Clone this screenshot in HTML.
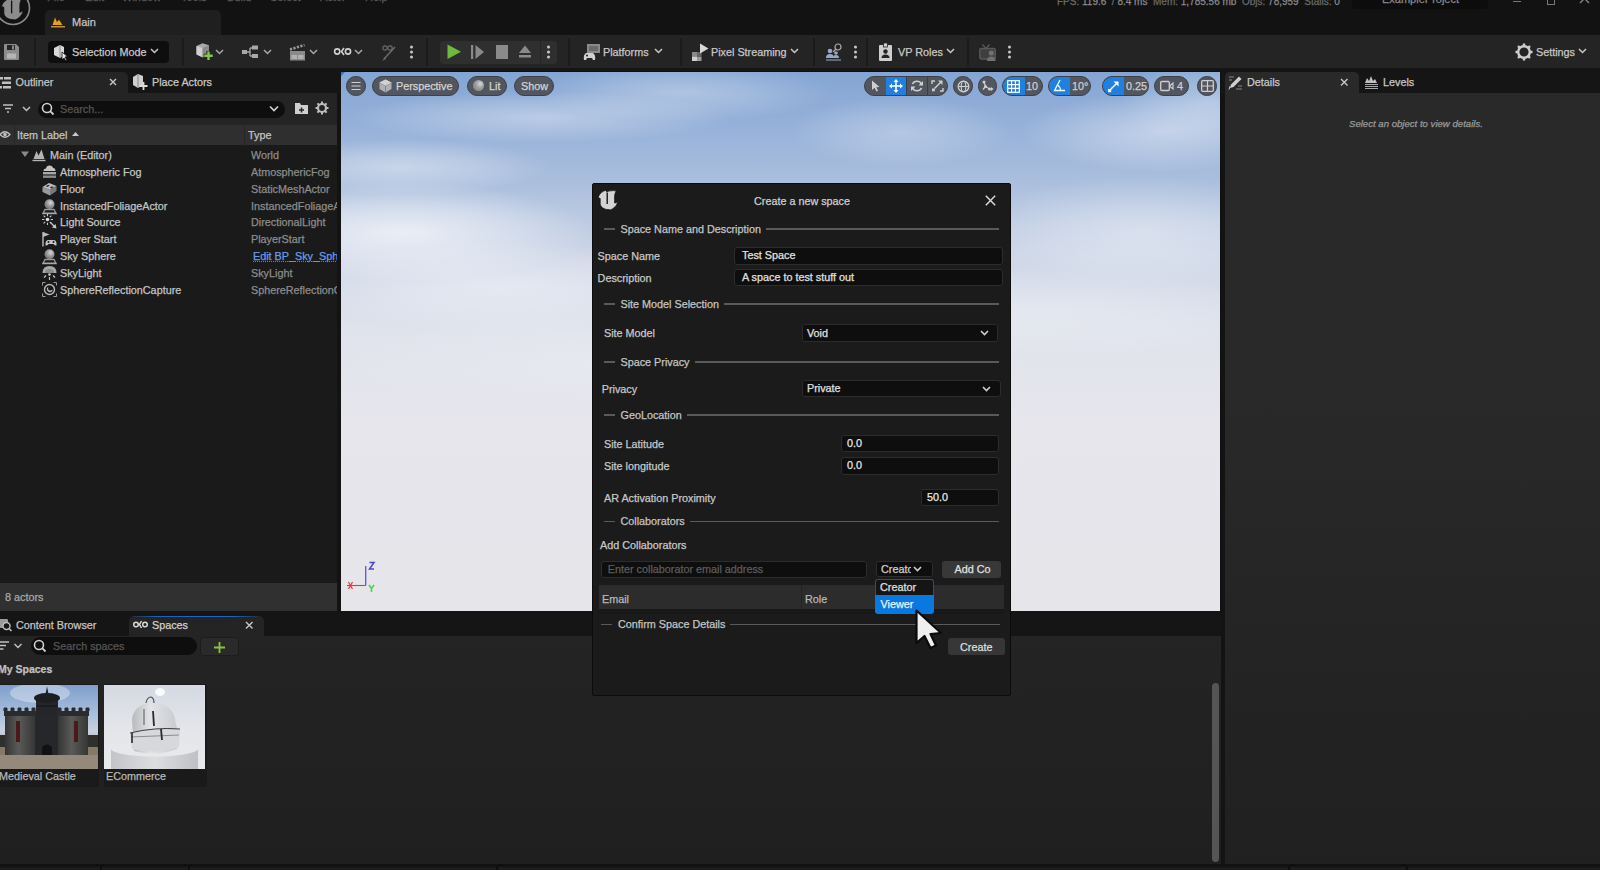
<!DOCTYPE html>
<html><head><meta charset="utf-8">
<style>
*{box-sizing:border-box}
html,body{margin:0;padding:0}
body{width:1600px;height:870px;overflow:hidden;position:relative;background:#131313;font-family:"Liberation Sans",sans-serif;font-size:10.8px;color:#c0c0c0;-webkit-text-stroke:0.25px currentColor}
.a{position:absolute}
.t{position:absolute;white-space:nowrap;line-height:12px}
svg{position:absolute;overflow:visible}
</style></head>
<body>
<!-- TITLE BAR -->
<div class="a" style="left:0;top:0;width:1600px;height:35px;background:#121212"></div>
<div class="a" id="maintab" style="left:45px;top:9.5px;width:176px;height:26px;background:#1f1f1f;border-radius:5px 5px 0 0"></div>
<div class="t" style="left:72px;top:16px;color:#c4c4c4;font-size:11px">Main</div>

<!-- TOOLBAR -->
<div class="a" style="left:0;top:35px;width:1600px;height:33px;background:#242424"></div>


<!-- TITLE CONTENT -->
<svg style="left:0;top:0" width="40" height="35" viewBox="0 0 40 35"><circle cx="13" cy="8" r="16.5" fill="none" stroke="#8a8a8a" stroke-width="1.6"/><g transform="translate(1.5,-2) scale(1.1)"><path d="M0 7.5 C1.5 3.5 4.5 1 8 0.3 L8.6 1.8 C11 0.9 14.5 0.3 18.2 0.8 C17.2 2.8 16.6 4.8 16.6 7 L16.6 13 C17.6 13 18.6 12.4 19.6 11.4 C19.2 15.5 15.8 18.5 12.2 20 C11.5 19.5 11 19.3 10.5 19.6 C6 19.6 2.2 17 2.2 13.5 L2.2 8.5 Z" fill="#8c8c8c" stroke="#111" stroke-width="0.6"/><path d="M9.2 2.5 L9.2 14" stroke="#111" stroke-width="1.2"/></g></svg>
<div class="t" style="left:47px;top:-9px;color:#5a5a5a;font-size:11px;word-spacing:0">File</div>
<div class="t" style="left:85px;top:-9px;color:#5a5a5a;font-size:11px">Edit</div>
<div class="t" style="left:122px;top:-9px;color:#5a5a5a;font-size:11px">Window</div>
<div class="t" style="left:181px;top:-9px;color:#5a5a5a;font-size:11px">Tools</div>
<div class="t" style="left:227px;top:-9px;color:#5a5a5a;font-size:11px">Build</div>
<div class="t" style="left:270px;top:-9px;color:#5a5a5a;font-size:11px">Select</div>
<div class="t" style="left:320px;top:-9px;color:#5a5a5a;font-size:11px">Actor</div>
<div class="t" style="left:365px;top:-9px;color:#5a5a5a;font-size:11px">Help</div>
<div class="t" style="left:1057px;top:-4.5px;color:#6a6a6a;font-size:10px">FPS: <span style="color:#8a8a8a">119.6</span> &nbsp;/ <span style="color:#8a8a8a">8.4 ms</span> &nbsp;Mem: <span style="color:#8a8a8a">1,785.56 mb</span> &nbsp;Objs: <span style="color:#8a8a8a">78,959</span> &nbsp;Stalls: <span style="color:#8a8a8a">0</span></div>
<div class="a" style="left:1352px;top:-4px;width:136px;height:13px;background:#0c0c0c;border-radius:4px"></div>
<div class="t" style="left:1382px;top:-7px;color:#8a8a8a;font-size:11px">ExampleProject</div>
<div class="a" style="left:1513px;top:1px;width:8px;height:1px;background:#777"></div>
<div class="a" style="left:1547px;top:-3px;width:8px;height:8px;border:1px solid #777"></div>
<svg style="left:1579px;top:-2px" width="12" height="8"><path d="M1 -4 L10 5 M10 -4 L1 5" stroke="#888" stroke-width="1.3"/></svg>
<svg style="left:51px;top:16.5px" width="16" height="12"><path d="M1.5 8 L4 0.5 L6 5 L8 2.8 L11.5 8 Z" fill="#e3a11a"/><rect x="0" y="9" width="14" height="1.5" fill="#c0903a"/></svg>

<!-- TOOLBAR CONTENT -->
<svg style="left:4px;top:44px" width="16" height="17"><path d="M0 1 Q0 0 1 0 L12 0 L15 3 L15 15 Q15 16 14 16 L1 16 Q0 16 0 15 Z" fill="#8c8c8c"/><rect x="3" y="1" width="8" height="5" fill="#242424"/><rect x="8" y="1.5" width="2" height="4" fill="#8c8c8c"/><rect x="3" y="9.5" width="9" height="5" fill="#b5b5b5"/></svg>
<div class="a" style="left:34px;top:38px;width:2px;height:28px;background:#1b1b1b"></div>
<div class="a" style="left:48px;top:41px;width:121px;height:22px;background:#0e0e0e;border-radius:4px"></div>
<svg style="left:54px;top:45px" width="14" height="16"><path d="M0 3 L6 0 L10 2 L10 11 L6 13 L0 10 Z" fill="#d8d8d8"/><path d="M6 0 L6 13" stroke="#888" stroke-width="1"/><path d="M8 7 L8 15 L10 13 L12 16 L13 15 L11 12 L13.5 11.5 Z" fill="#e8e8e8" stroke="#0e0e0e" stroke-width="0.8"/></svg>
<div class="t" style="left:72px;top:46px;color:#c8c8c8">Selection Mode</div>
<svg style="left:150px;top:48px" width="10" height="7"><path d="M1 1 L4.5 4.5 L8 1" stroke="#c8c8c8" stroke-width="1.5" fill="none"/></svg>
<div class="a" style="left:182px;top:38px;width:2px;height:28px;background:#1b1b1b"></div>
<svg style="left:196px;top:43px" width="20" height="19"><path d="M0.5 3 L6.5 0.3 L13 2.2 L13 11 L7 14.5 L0.5 11.5 Z" fill="#a8a8a8"/><path d="M0.5 3 L6.5 5 L6.5 14.2 L0.5 11.5 Z" fill="#cfcfcf"/><path d="M6.5 5 L13 2.2 L13 11 L6.5 14.2 Z" fill="#8a8a8a"/><path d="M12.5 8 L12.5 17.5 M7.8 12.8 L17.2 12.8" stroke="#242424" stroke-width="4.2"/><path d="M12.5 8.5 L12.5 17 M8.3 12.8 L16.7 12.8" stroke="#86c846" stroke-width="2.4"/></svg>
<svg style="left:215px;top:49px" width="10" height="7"><path d="M1 1 L4.5 4.5 L8 1" stroke="#a8a8a8" stroke-width="1.5" fill="none"/></svg>
<svg style="left:242px;top:45px" width="20" height="14"><rect x="0" y="5" width="5" height="4" fill="#a8a8a8"/><path d="M5 7 L8 7 M8 3 L8 11 M8 3 L10 3 M8 11 L10 11" stroke="#a8a8a8" stroke-width="1.3" fill="none"/><rect x="10" y="0.5" width="6" height="4" fill="#a8a8a8"/><rect x="10" y="9" width="6" height="4" fill="#a8a8a8"/></svg>
<svg style="left:263px;top:49px" width="10" height="7"><path d="M1 1 L4.5 4.5 L8 1" stroke="#a8a8a8" stroke-width="1.5" fill="none"/></svg>
<svg style="left:289px;top:44px" width="17" height="17"><path d="M1 5.5 L15.5 1" stroke="#9a9a9a" stroke-width="2.6" stroke-dasharray="2.2 1.4"/><rect x="1" y="7" width="15" height="9.5" fill="#8a8a8a"/><rect x="2.5" y="11" width="5.5" height="4" fill="#b0b0b0"/><rect x="9" y="11" width="5.5" height="4" fill="#b0b0b0"/></svg>
<svg style="left:309px;top:49px" width="10" height="7"><path d="M1 1 L4.5 4.5 L8 1" stroke="#a8a8a8" stroke-width="1.5" fill="none"/></svg>
<svg style="left:334px;top:47px" width="18" height="9"><circle cx="3.2" cy="4.5" r="2.6" fill="none" stroke="#d0d0d0" stroke-width="1.6"/><circle cx="14" cy="4.5" r="2.6" fill="none" stroke="#d0d0d0" stroke-width="1.6"/><path d="M10 1 L7.5 4.5 L10 8" stroke="#d0d0d0" stroke-width="1.6" fill="none"/></svg>
<svg style="left:354px;top:49px" width="10" height="7"><path d="M1 1 L4.5 4.5 L8 1" stroke="#a8a8a8" stroke-width="1.5" fill="none"/></svg>
<svg style="left:381px;top:44px" width="18" height="18"><path d="M3 15 L14 3" stroke="#6a6a6a" stroke-width="1.5"/><path d="M1 17 L4 13 L5 15 Z" fill="#6a6a6a"/><circle cx="4" cy="4" r="2.2" fill="none" stroke="#6a6a6a" stroke-width="1.2"/><circle cx="9" cy="4" r="2.2" fill="none" stroke="#6a6a6a" stroke-width="1.2"/></svg>
<svg style="left:409px;top:45px" width="6" height="15"><circle cx="2.5" cy="2" r="1.5" fill="#c8c8c8"/><circle cx="2.5" cy="7" r="1.5" fill="#c8c8c8"/><circle cx="2.5" cy="12" r="1.5" fill="#c8c8c8"/></svg>
<div class="a" style="left:426px;top:38px;width:2px;height:28px;background:#1b1b1b"></div>
<div class="a" style="left:440px;top:40.5px;width:117px;height:23.5px;background:#2f2f2f;border-radius:4px"></div>
<div class="a" style="left:539.5px;top:40.5px;width:1.5px;height:23.5px;background:#262626"></div>
<svg style="left:447px;top:44px" width="15" height="16"><path d="M0.5 0.5 L14 7.8 L0.5 15 Z" fill="#6dbb3c"/></svg>
<svg style="left:471px;top:45px" width="15" height="14"><rect x="0" y="0" width="2.2" height="14" fill="#8a8a8a"/><path d="M4.5 0 L13 7 L4.5 14 Z" fill="#8a8a8a"/></svg>
<div class="a" style="left:496px;top:45px;width:12px;height:14px;background:#8a8a8a"></div>
<svg style="left:518px;top:44px" width="15" height="15"><path d="M1 9 L7 1.5 L13 9 Z" fill="#8a8a8a"/><rect x="1" y="11" width="12" height="2.5" fill="#8a8a8a"/></svg>
<svg style="left:546px;top:45px" width="6" height="15"><circle cx="2.5" cy="2" r="1.5" fill="#c8c8c8"/><circle cx="2.5" cy="7" r="1.5" fill="#c8c8c8"/><circle cx="2.5" cy="12" r="1.5" fill="#c8c8c8"/></svg>
<div class="a" style="left:568px;top:38px;width:2px;height:28px;background:#1b1b1b"></div>
<svg style="left:583px;top:44px" width="19" height="17"><rect x="4" y="0" width="13" height="9" fill="#8a8a8a"/><rect x="6" y="2" width="9" height="5" fill="#6a6a6a"/><path d="M1 16 Q0 11 3 9 L10 9 Q13 11 12 16 L10 16 L9 14 L4 14 L3 16 Z" fill="#d0d0d0"/><circle cx="4" cy="11.5" r="1" fill="#242424"/></svg>
<div class="t" style="left:603px;top:46px;color:#c8c8c8">Platforms</div>
<svg style="left:654px;top:48px" width="10" height="7"><path d="M1 1 L4.5 4.5 L8 1" stroke="#c8c8c8" stroke-width="1.5" fill="none"/></svg>
<div class="a" style="left:680px;top:38px;width:2px;height:28px;background:#1b1b1b"></div>
<svg style="left:692px;top:43px" width="18" height="18"><rect x="0" y="9" width="5" height="4.5" fill="#8a8a8a"/><rect x="0" y="13.5" width="5" height="4.5" fill="#d0d0d0"/><rect x="5" y="13.5" width="4.5" height="4.5" fill="#9a9a9a"/><rect x="5" y="9" width="4.5" height="4.5" fill="#666"/><path d="M8 0.5 L16.5 5.5 L8 10.5 Z" fill="#d8d8d8"/></svg>
<div class="t" style="left:711px;top:46px;color:#c8c8c8">Pixel Streaming</div>
<svg style="left:790px;top:48px" width="10" height="7"><path d="M1 1 L4.5 4.5 L8 1" stroke="#c8c8c8" stroke-width="1.5" fill="none"/></svg>
<div class="a" style="left:813px;top:38px;width:2px;height:28px;background:#1b1b1b"></div>
<svg style="left:826px;top:43px" width="17" height="19"><circle cx="4" cy="8" r="2.3" fill="#9aa8c8"/><path d="M0 15 Q0 11 4 11 Q8 11 8 15 Z" fill="#9aa8c8"/><circle cx="10" cy="10" r="1.8" fill="#9aa8c8"/><path d="M7 15 Q7 12 10 12 Q13 12 13 15 Z" fill="#9aa8c8"/><path d="M0 17 L15 17" stroke="#8090b0" stroke-width="1.3"/><circle cx="12" cy="4" r="3" fill="none" stroke="#aaa" stroke-width="1.2"/><path d="M10 6 L7 9" stroke="#aaa" stroke-width="1.2"/></svg>
<svg style="left:853px;top:45px" width="6" height="15"><circle cx="2.5" cy="2" r="1.5" fill="#c8c8c8"/><circle cx="2.5" cy="7" r="1.5" fill="#c8c8c8"/><circle cx="2.5" cy="12" r="1.5" fill="#c8c8c8"/></svg>
<div class="a" style="left:866px;top:38px;width:2px;height:28px;background:#1b1b1b"></div>
<svg style="left:879px;top:43px" width="14" height="18"><rect x="0" y="2" width="13" height="16" rx="1" fill="#cfcfcf"/><rect x="4.5" y="0" width="4" height="4" fill="#cfcfcf" stroke="#242424" stroke-width="0.8"/><circle cx="6.5" cy="8.5" r="2.2" fill="#242424"/><path d="M2.5 15 Q2.5 11.5 6.5 11.5 Q10.5 11.5 10.5 15 Z" fill="#242424"/></svg>
<div class="t" style="left:898px;top:46px;color:#c8c8c8">VP Roles</div>
<svg style="left:945.5px;top:48px" width="10" height="7"><path d="M1 1 L4.5 4.5 L8 1" stroke="#c8c8c8" stroke-width="1.5" fill="none"/></svg>
<div class="a" style="left:967px;top:38px;width:2px;height:28px;background:#1b1b1b"></div>
<svg style="left:979px;top:43.5px" width="18" height="18"><path d="M3.5 0.5 L7 4.5 L10.5 0.5" stroke="#585858" stroke-width="1.2" fill="none"/><rect x="0.8" y="4.5" width="15.5" height="10.5" rx="1.5" fill="#3e3e3e" stroke="#585858" stroke-width="1.4"/><circle cx="12.3" cy="9" r="2.6" fill="#707070"/><path d="M8 17 Q8 12.5 12.3 12.5 Q16.6 12.5 16.6 17 Z" fill="#707070"/></svg>
<svg style="left:1007px;top:45px" width="6" height="15"><circle cx="2.5" cy="2" r="1.5" fill="#c8c8c8"/><circle cx="2.5" cy="7" r="1.5" fill="#c8c8c8"/><circle cx="2.5" cy="12" r="1.5" fill="#c8c8c8"/></svg>
<svg style="left:1515px;top:43px" width="18" height="18"><g transform="translate(9,9)"><circle r="5.8" fill="none" stroke="#cfcfcf" stroke-width="2.4"/><g stroke="#cfcfcf" stroke-width="2.4"><path d="M0 -8.5 L0 -5.5 M0 5.5 L0 8.5 M-8.5 0 L-5.5 0 M5.5 0 L8.5 0 M-6 -6 L-4 -4 M4 4 L6 6 M-6 6 L-4 4 M4 -4 L6 -6"/></g></g></svg>
<div class="t" style="left:1536px;top:46px;color:#c8c8c8">Settings</div>
<svg style="left:1578px;top:48px" width="10" height="7"><path d="M1 1 L4.5 4.5 L8 1" stroke="#c8c8c8" stroke-width="1.5" fill="none"/></svg>

<!-- TAB WELL -->
<div class="a" style="left:0;top:68px;width:1600px;height:25px;background:#151515"></div>

<!-- OUTLINER -->
<div class="a" style="left:0;top:72px;width:128px;height:21px;background:#242424;border-radius:0 5px 0 0"></div>
<div class="a" style="left:0;top:93px;width:337px;height:32px;background:#242424"></div>
<div class="a" style="left:0;top:125px;width:337px;height:20px;background:#2f2f2f"></div>
<div class="a" style="left:0;top:145px;width:337px;height:438px;background:#1a1a1a"></div>
<div class="a" style="left:0;top:583px;width:337px;height:28px;background:#303030"></div>


<!-- OUTLINER CONTENT -->
<svg style="left:0;top:76px" width="12" height="14"><rect x="0" y="1" width="3" height="2.5" fill="#c0c0c0"/><rect x="4" y="1" width="7" height="2.5" fill="#c0c0c0"/><rect x="2" y="5.5" width="9" height="2.5" fill="#c0c0c0"/><rect x="0" y="10" width="2" height="2.5" fill="#c0c0c0"/><rect x="3" y="10" width="8" height="2.5" fill="#c0c0c0"/></svg>
<div class="t" style="left:15.5px;top:76px;color:#c4c4c4">Outliner</div>
<svg style="left:109px;top:78px" width="9" height="9"><path d="M1 1 L7 7 M7 1 L1 7" stroke="#c8c8c8" stroke-width="1.4"/></svg>
<svg style="left:133px;top:74px" width="16" height="17"><path d="M0 3 L5 0 L10 2 L10 11 L5 14 L0 11 Z" fill="#cfcfcf"/><path d="M5 0 L5 14" stroke="#888" stroke-width="1"/><path d="M10.5 8 L10.5 16 M6.5 12 L14.5 12" stroke="#dcdcdc" stroke-width="1.8"/></svg>
<div class="t" style="left:152px;top:76px;color:#c8c8c8">Place Actors</div>

<svg style="left:3px;top:104px" width="26" height="10"><path d="M0 1 L10 1 M2 4.5 L8 4.5 M4 8 L6 8" stroke="#c0c0c0" stroke-width="1.7"/><path d="M20 3 L23.5 6.5 L27 3" stroke="#c0c0c0" stroke-width="1.5" fill="none"/></svg>
<div class="a" style="left:38px;top:100.5px;width:247px;height:17.5px;background:#0e0e0e;border-radius:9px"></div>
<svg style="left:41px;top:102px" width="14" height="14"><circle cx="6" cy="6" r="4.5" fill="none" stroke="#d0d0d0" stroke-width="1.6"/><path d="M9.2 9.2 L12.5 12.5" stroke="#d0d0d0" stroke-width="1.8"/></svg>
<div class="t" style="left:60px;top:103px;color:#555">Search...</div>
<svg style="left:269px;top:105px" width="11" height="8"><path d="M1 1.5 L5 5.5 L9 1.5" stroke="#d0d0d0" stroke-width="1.7" fill="none"/></svg>
<svg style="left:295px;top:102px" width="14" height="13"><path d="M0 2 L0 12 L13 12 L13 3 L6 3 L5 1 L0 1 Z" fill="#cfcfcf"/><path d="M6.5 5.5 L6.5 10.5 M4 8 L9 8" stroke="#242424" stroke-width="1.5"/></svg>
<svg style="left:315px;top:101px" width="14" height="14"><g transform="translate(7,7)"><circle r="4" fill="none" stroke="#bdbdbd" stroke-width="2.2"/><g stroke="#bdbdbd" stroke-width="2"><path d="M0 -6.5 L0 -4 M0 4 L0 6.5 M-6.5 0 L-4 0 M4 0 L6.5 0 M-4.6 -4.6 L-3 -3 M3 3 L4.6 4.6 M-4.6 4.6 L-3 3 M3 -3 L4.6 -4.6"/></g></g></svg>

<svg style="left:0;top:130px" width="11" height="9"><path d="M0 4.5 Q5 -1 10 4.5 Q5 10 0 4.5 Z" fill="none" stroke="#c0c0c0" stroke-width="1.3"/><circle cx="5" cy="4.5" r="1.8" fill="#c0c0c0"/></svg>
<div class="a" style="left:14px;top:125px;width:1px;height:20px;background:#262626"></div>
<div class="t" style="left:17px;top:129px;color:#c4c4c4">Item Label</div>
<svg style="left:72px;top:131px" width="8" height="6"><path d="M0 5 L3.5 1 L7 5 Z" fill="#c8c8c8"/></svg>
<div class="a" style="left:243.5px;top:125px;width:1.5px;height:20px;background:#262626"></div>
<div class="t" style="left:248px;top:129px;color:#c4c4c4">Type</div>
<svg style="left:21px;top:151px" width="9" height="7"><path d="M0 0.5 L8 0.5 L4 6 Z" fill="#8a8a8a"/></svg>

<svg style="left:32px;top:147.0px" width="16" height="16"><path d="M0.5 13.5 L13.5 13.5" stroke="#b4b4b4" stroke-width="1.4"/><path d="M1.5 12 L4.5 4 L6.5 8.5 L9.5 2.5 L12.5 12 Z" fill="#b4b4b4"/></svg>
<div class="t" style="left:50px;top:149.0px;color:#c4c4c4">Main (Editor)</div>
<div class="a" style="left:251px;top:149.0px;width:86px;height:14px;overflow:hidden"><div class="t" style="left:0;top:0;color:#8c8c8c">World</div></div>
<svg style="left:42px;top:163.8px" width="16" height="16"><path d="M1.5 7 Q1.5 4.5 4 4.5 Q4.5 1.5 7.5 1.5 Q10.5 1.5 11 4 Q13.5 4 13.5 7 Z" fill="#c4c4c4"/><rect x="1" y="8" width="13" height="2.4" fill="#a8a8a8"/><rect x="1" y="11.5" width="13" height="2.4" fill="#8c8c8c"/></svg>
<div class="t" style="left:60px;top:165.8px;color:#c4c4c4">Atmospheric Fog</div>
<div class="a" style="left:251px;top:165.8px;width:86px;height:14px;overflow:hidden"><div class="t" style="left:0;top:0;color:#8c8c8c">AtmosphericFog</div></div>
<svg style="left:42px;top:180.7px" width="16" height="16"><path d="M0.5 6 L7 2 L14.5 5 L8 9 Z" fill="#c0c0c0"/><path d="M0.5 6 L8 9 L8 14.5 L0.5 11 Z" fill="#9a9a9a"/><path d="M8 9 L14.5 5 L14.5 10 L8 14.5 Z" fill="#7a7a7a"/><path d="M3.5 5.2 L6 3.8 L8 4.6 L5.5 6 Z M7.5 6.8 L10 5.3 L12 6.1 L9.5 7.6 Z" fill="#3a3a3a"/></svg>
<div class="t" style="left:60px;top:182.7px;color:#c4c4c4">Floor</div>
<div class="a" style="left:251px;top:182.7px;width:86px;height:14px;overflow:hidden"><div class="t" style="left:0;top:0;color:#8c8c8c">StaticMeshActor</div></div>
<svg style="left:42px;top:197.6px" width="16" height="16"><defs><radialGradient id="sph" cx="0.6" cy="0.35" r="0.7"><stop offset="0" stop-color="#d8d8d8"/><stop offset="0.5" stop-color="#9a9a9a"/><stop offset="1" stop-color="#6a6a6a"/></radialGradient></defs><circle cx="7.5" cy="6.2" r="5" fill="url(#sph)"/><path d="M1 15.5 L3 11.5 L12 11.5 L14 15.5 Z" fill="none" stroke="#9a9a9a" stroke-width="1.3"/><path d="M0.5 15.3 L14.5 15.3" stroke="#aaa" stroke-width="1.3"/></svg>
<div class="t" style="left:60px;top:199.6px;color:#c4c4c4">InstancedFoliageActor</div>
<div class="a" style="left:251px;top:199.6px;width:86px;height:14px;overflow:hidden"><div class="t" style="left:0;top:0;color:#8c8c8c">InstancedFoliageActor</div></div>
<svg style="left:42px;top:214.4px" width="16" height="16"><circle cx="5.5" cy="5.5" r="1.8" fill="#e0e0e0"/><g stroke="#c8c8c8" stroke-width="1.1"><path d="M5.5 0 L5.5 2.3 M5.5 8.7 L5.5 11 M0 5.5 L2.3 5.5 M8.7 5.5 L11 5.5 M1.6 1.6 L3.2 3.2 M7.8 7.8 L9.4 9.4 M1.6 9.4 L3.2 7.8 M7.8 3.2 L9.4 1.6"/><path d="M8.5 8.5 L13 13" stroke-width="1.3"/></g><path d="M14.5 14.5 L10 13.5 L13.5 10 Z" fill="#c8c8c8"/></svg>
<div class="t" style="left:60px;top:216.4px;color:#c4c4c4">Light Source</div>
<div class="a" style="left:251px;top:216.4px;width:86px;height:14px;overflow:hidden"><div class="t" style="left:0;top:0;color:#8c8c8c">DirectionalLight</div></div>
<svg style="left:42px;top:231.2px" width="16" height="16"><path d="M1 1 L1 15.5" stroke="#bbb" stroke-width="1.4"/><path d="M1 1 L7.5 3.5 L1 6 Z" fill="#bbb"/><path d="M3.5 14.5 Q3 9 6.5 9 L11.5 9 Q15 9 14.5 14.5 Q13 15 11.5 13 L6.5 13 Q5 15 3.5 14.5 Z" fill="#c4c4c4"/><circle cx="6.5" cy="11" r="1" fill="#1a1a1a"/><circle cx="11.5" cy="11" r="1" fill="#1a1a1a"/></svg>
<div class="t" style="left:60px;top:233.2px;color:#c4c4c4">Player Start</div>
<div class="a" style="left:251px;top:233.2px;width:86px;height:14px;overflow:hidden"><div class="t" style="left:0;top:0;color:#8c8c8c">PlayerStart</div></div>
<svg style="left:42px;top:248.1px" width="16" height="16"><defs><radialGradient id="sph2" cx="0.6" cy="0.35" r="0.7"><stop offset="0" stop-color="#d8d8d8"/><stop offset="0.5" stop-color="#9a9a9a"/><stop offset="1" stop-color="#6a6a6a"/></radialGradient></defs><circle cx="7.5" cy="6.2" r="5" fill="url(#sph2)"/><path d="M1 15.5 L3 11.5 L12 11.5 L14 15.5 Z" fill="none" stroke="#9a9a9a" stroke-width="1.3"/><path d="M0.5 15.3 L14.5 15.3" stroke="#aaa" stroke-width="1.3"/></svg>
<div class="t" style="left:60px;top:250.1px;color:#c4c4c4">Sky Sphere</div>
<div class="a" style="left:251px;top:250.1px;width:86px;height:14px;overflow:hidden"><div class="t" style="left:2px;top:0;color:#6a9ae8;text-decoration:underline dotted #5a86d0">Edit BP_Sky_Sphere</div></div>
<svg style="left:42px;top:265.0px" width="16" height="16"><path d="M0.5 8 Q0.5 1 7.5 1 Q14.5 1 14.5 8 Z" fill="#a8a8a8"/><path d="M3 8 Q3 4 7.5 4 Q12 4 12 8 Z" fill="#8a8a8a"/><circle cx="7.5" cy="9.5" r="1.3" fill="#d0d0d0"/><g stroke="#c0c0c0" stroke-width="1.2"><path d="M7.5 12 L7.5 15 M4 10.5 L2 12.5 M11 10.5 L13 12.5"/></g></svg>
<div class="t" style="left:60px;top:267.0px;color:#c4c4c4">SkyLight</div>
<div class="a" style="left:251px;top:267.0px;width:86px;height:14px;overflow:hidden"><div class="t" style="left:0;top:0;color:#8c8c8c">SkyLight</div></div>
<svg style="left:42px;top:281.8px" width="16" height="16"><circle cx="7.5" cy="7.5" r="5" fill="none" stroke="#b8b8b8" stroke-width="1.4"/><path d="M4.8 6.5 Q5 10.5 8.5 10.3 Q10.5 10 10.8 7.5 Q9 9.2 7 8.3 Q5.5 7.5 6.2 5 Q5 5.5 4.8 6.5 Z" fill="#b8b8b8"/><path d="M0.5 3.5 L0.5 0.5 L3.5 0.5 M11.5 0.5 L14.5 0.5 L14.5 3.5 M0.5 11.5 L0.5 14.5 L3.5 14.5 M11.5 14.5 L14.5 14.5 L14.5 11.5" stroke="#999" stroke-width="1" fill="none"/></svg>
<div class="t" style="left:60px;top:283.8px;color:#c4c4c4">SphereReflectionCapture</div>
<div class="a" style="left:251px;top:283.8px;width:86px;height:14px;overflow:hidden"><div class="t" style="left:0;top:0;color:#8c8c8c">SphereReflectionCapture</div></div>
<div class="t" style="left:5px;top:591px;color:#a8a8a8">8 actors</div>
<!-- VIEWPORT -->
<div class="a" id="vp" style="left:341px;top:72px;width:880px;height:539px;overflow:hidden;background:linear-gradient(180deg,#84a5d3 0%,#96b1d9 10%,#aec1de 22%,#cdd6e7 34%,#e0e3ec 48%,#e6e6ec 65%,#e5e5ea 100%)">
  <div class="a" style="left:-130px;top:110px;width:380px;height:100px;background:radial-gradient(closest-side,rgba(244,246,250,0.8) 0%,rgba(244,246,250,0.44) 50%,rgba(244,246,250,0) 100%)"></div>
  <div class="a" style="left:-40px;top:170px;width:400px;height:90px;background:radial-gradient(closest-side,rgba(244,246,250,0.5) 0%,rgba(244,246,250,0.28) 50%,rgba(244,246,250,0) 100%)"></div>
  <div class="a" style="left:-90px;top:67px;width:300px;height:56px;background:radial-gradient(closest-side,rgba(244,246,250,0.45) 0%,rgba(244,246,250,0.25) 50%,rgba(244,246,250,0) 100%)"></div>
  <div class="a" style="left:10px;top:19px;width:380px;height:52px;background:radial-gradient(closest-side,rgba(244,246,250,0.4) 0%,rgba(244,246,250,0.22) 50%,rgba(244,246,250,0) 100%)"></div>
  <div class="a" style="left:190px;top:-10px;width:300px;height:60px;background:radial-gradient(closest-side,rgba(244,246,250,0.35) 0%,rgba(244,246,250,0.19) 50%,rgba(244,246,250,0) 100%)"></div>
  <div class="a" style="left:450px;top:25px;width:220px;height:70px;background:radial-gradient(closest-side,rgba(244,246,250,0.3) 0%,rgba(244,246,250,0.17) 50%,rgba(244,246,250,0) 100%)"></div>
  <div class="a" style="left:680px;top:20px;width:280px;height:80px;background:radial-gradient(closest-side,rgba(244,246,250,0.45) 0%,rgba(244,246,250,0.25) 50%,rgba(244,246,250,0) 100%)"></div>
  <div class="a" style="left:630px;top:105px;width:340px;height:110px;background:radial-gradient(closest-side,rgba(244,246,250,0.45) 0%,rgba(244,246,250,0.25) 50%,rgba(244,246,250,0) 100%)"></div>
  <div class="a" style="left:460px;top:195px;width:480px;height:90px;background:radial-gradient(closest-side,rgba(244,246,250,0.35) 0%,rgba(244,246,250,0.19) 50%,rgba(244,246,250,0) 100%)"></div>
  <div class="a" style="left:0px;top:240px;width:600px;height:100px;background:radial-gradient(closest-side,rgba(244,246,250,0.3) 0%,rgba(244,246,250,0.17) 50%,rgba(244,246,250,0) 100%)"></div>
  <div class="a" style="left:780px;top:-15px;width:180px;height:90px;background:radial-gradient(closest-side,rgba(244,246,250,0.35) 0%,rgba(244,246,250,0.19) 50%,rgba(244,246,250,0) 100%)"></div>
<div class="a" style="left:0;top:0;width:0;height:0;border-top:4px solid #1f78e0;border-right:4px solid transparent"></div>
</div>
<div class="a" style="left:341px;top:70.5px;width:880px;height:1.5px;background:#0e1014"></div>
<div class="a" style="left:341px;top:611px;width:880px;height:1.5px;background:#0e0e0e"></div>
<div class="a" style="left:1219.5px;top:72px;width:1.5px;height:539px;background:#101010"></div>
<!-- VIEWPORT TOOLBAR -->
<div class="a" style="left:346px;top:76px;width:19.5px;height:19.5px;border-radius:50%;background:#52565e;border:1px solid #3c4047"></div>
<svg style="left:351px;top:81px" width="10" height="10"><path d="M0.5 1.5 L9.5 1.5 M0.5 5 L9.5 5 M0.5 8.5 L9.5 8.5" stroke="#d0d0d0" stroke-width="1.2"/></svg>
<div class="a" style="left:372px;top:76px;width:87px;height:19.5px;border-radius:10px;background:#52565e;border:1px solid #3c4047"></div>
<svg style="left:379px;top:79px" width="14" height="14"><path d="M6.5 0.5 L12.5 3.5 L12.5 10 L6.5 13.5 L0.5 10 L0.5 3.5 Z" fill="#aeb0b4"/><path d="M0.5 3.5 L6.5 6.8 L12.5 3.5 M6.5 6.8 L6.5 13.5" stroke="#80838a" stroke-width="1" fill="none"/><path d="M0.5 3.5 L6.5 0.5 L12.5 3.5 L6.5 6.8 Z" fill="#d0d2d5"/></svg>
<div class="t" style="left:396px;top:79.5px;color:#d4d4d4">Perspective</div>
<div class="a" style="left:466.5px;top:76px;width:40.5px;height:19.5px;border-radius:10px;background:#52565e;border:1px solid #3c4047"></div>
<div class="a" style="left:473px;top:80px;width:11px;height:11px;border-radius:50%;background:radial-gradient(circle at 65% 35%,#d8d8d8 0%,#a0a0a0 40%,#7a7a7a 100%)"></div>
<div class="t" style="left:489px;top:79.5px;color:#d4d4d4">Lit</div>
<div class="a" style="left:514px;top:76px;width:40px;height:19.5px;border-radius:10px;background:#52565e;border:1px solid #3c4047"></div>
<div class="t" style="left:521px;top:79.5px;color:#d4d4d4">Show</div>

<div class="a" style="left:864px;top:76px;width:83.5px;height:19.5px;border-radius:10px;background:#52565e;border:1px solid #3c4047;overflow:hidden">
  <div class="a" style="left:20.5px;top:-1px;width:20.5px;height:21px;background:#1f80e0"></div>
  <div class="a" style="left:41px;top:0;width:1px;height:19px;background:#3a3e46"></div>
  <div class="a" style="left:62px;top:0;width:1px;height:19px;background:#3a3e46"></div>
</div>
<svg style="left:871px;top:80px" width="10" height="12"><path d="M1 0.5 L1 10 L3.5 7.8 L5.5 11.5 L7 10.8 L5.2 7.2 L8.5 7 Z" fill="#d0d0d0"/></svg>
<svg style="left:889px;top:79px" width="14" height="14"><path d="M7 1 L7 13 M1 7 L13 7" stroke="#fff" stroke-width="1.5"/><path d="M7 0 L9.5 3 L4.5 3 Z M7 14 L9.5 11 L4.5 11 Z M0 7 L3 4.5 L3 9.5 Z M14 7 L11 4.5 L11 9.5 Z" fill="#fff"/></svg>
<svg style="left:910px;top:79px" width="14" height="14"><path d="M11.5 5 A5 5 0 0 0 2.5 5" stroke="#cfcfcf" stroke-width="1.6" fill="none"/><path d="M2.5 9 A5 5 0 0 0 11.5 9" stroke="#cfcfcf" stroke-width="1.6" fill="none"/><path d="M13 2 L13 6.5 L8.5 6.5 Z M1 12 L1 7.5 L5.5 7.5 Z" fill="#cfcfcf"/></svg>
<svg style="left:931px;top:80px" width="13" height="12"><path d="M1 4 L1 1 L4 1 M9 11 L12 11 L12 8" stroke="#cfcfcf" stroke-width="1.4" fill="none"/><path d="M3.5 8.5 L10 2" stroke="#cfcfcf" stroke-width="1.5"/><path d="M11.5 0.5 L11.5 5 L7 0.5 Z" fill="#cfcfcf"/><rect x="1" y="8.5" width="2.8" height="2.8" fill="#cfcfcf"/></svg>

<div class="a" style="left:953px;top:76px;width:19.5px;height:19.5px;border-radius:50%;background:#52565e;border:1px solid #3c4047"></div>
<svg style="left:956.5px;top:79.5px" width="13" height="13"><circle cx="6.5" cy="6.5" r="5.3" fill="none" stroke="#cfcfcf" stroke-width="1.3"/><ellipse cx="6.5" cy="6.5" rx="2.3" ry="5.3" fill="none" stroke="#cfcfcf" stroke-width="1.1"/><path d="M1.2 6.5 L11.8 6.5" stroke="#cfcfcf" stroke-width="1.1"/></svg>
<div class="a" style="left:977.5px;top:76px;width:19.5px;height:19.5px;border-radius:50%;background:#52565e;border:1px solid #3c4047"></div>
<svg style="left:981px;top:79.5px" width="13" height="13"><path d="M3 2 L4.5 6.5 L2 9.5 M4.5 6.5 L8.5 9 L11.5 9" stroke="#cfcfcf" stroke-width="1.2" fill="none"/><circle cx="3" cy="2" r="1.5" fill="#cfcfcf"/><circle cx="4.5" cy="6.5" r="1.5" fill="#cfcfcf"/><circle cx="8.5" cy="9" r="1.5" fill="#cfcfcf"/><path d="M12.5 9 L10 7 L10 11 Z" fill="#cfcfcf"/></svg>

<div class="a" style="left:1002px;top:76px;width:41px;height:19.5px;border-radius:10px;background:#52565e;border:1px solid #3c4047;overflow:hidden">
  <div class="a" style="left:-1px;top:-1px;width:22.5px;height:21px;background:#1f80e0"></div>
</div>
<svg style="left:1006.5px;top:79.5px" width="13" height="13"><rect x="0.7" y="0.7" width="11.6" height="11.6" fill="none" stroke="#fff" stroke-width="1.2"/><path d="M4.6 0.7 L4.6 12.3 M8.4 0.7 L8.4 12.3 M0.7 4.6 L12.3 4.6 M0.7 8.4 L12.3 8.4" stroke="#fff" stroke-width="1.1"/></svg>
<div class="t" style="left:1026px;top:80px;color:#d0d0d0">10</div>

<div class="a" style="left:1048px;top:76px;width:43px;height:19.5px;border-radius:10px;background:#52565e;border:1px solid #3c4047;overflow:hidden">
  <div class="a" style="left:-1px;top:-1px;width:22px;height:21px;background:#1f80e0"></div>
</div>
<svg style="left:1053px;top:79px" width="13" height="13"><path d="M7 1 L1.5 11.5 L12 11.5" stroke="#fff" stroke-width="1.3" fill="none"/><path d="M4.5 6 Q7.5 8 7.5 11.5" stroke="#fff" stroke-width="1.1" fill="none"/></svg>
<div class="t" style="left:1072px;top:80px;color:#d0d0d0">10°</div>

<div class="a" style="left:1102px;top:76px;width:47px;height:19.5px;border-radius:10px;background:#52565e;border:1px solid #3c4047;overflow:hidden">
  <div class="a" style="left:-1px;top:-1px;width:22px;height:21px;background:#1f80e0"></div>
</div>
<svg style="left:1107px;top:79.5px" width="13" height="13"><path d="M3 10 L10.5 2.5" stroke="#fff" stroke-width="1.5"/><path d="M11.5 1.5 L11.5 6.5 L6.5 1.5 Z" fill="#fff"/><rect x="1" y="9" width="3.2" height="3.2" fill="#fff"/></svg>
<div class="t" style="left:1126px;top:80px;color:#d0d0d0">0.25</div>

<div class="a" style="left:1154px;top:76px;width:35px;height:19.5px;border-radius:10px;background:#52565e;border:1px solid #3c4047"></div>
<svg style="left:1160px;top:80px" width="14" height="12"><rect x="0.7" y="1.5" width="8.6" height="9" rx="1" fill="none" stroke="#cfcfcf" stroke-width="1.3"/><path d="M9.5 6 L13 3 L13 9 Z" fill="none" stroke="#cfcfcf" stroke-width="1.2"/></svg>
<div class="t" style="left:1177px;top:80px;color:#d0d0d0">4</div>
<div class="a" style="left:1197px;top:76px;width:19.5px;height:19.5px;border-radius:50%;background:#52565e;border:1px solid #3c4047"></div>
<svg style="left:1200.5px;top:80px" width="13" height="12"><rect x="0.7" y="0.7" width="11.6" height="10.6" rx="1" fill="none" stroke="#cfcfcf" stroke-width="1.3"/><path d="M6.5 0.7 L6.5 11.3 M0.7 6 L12.3 6" stroke="#cfcfcf" stroke-width="1.2"/></svg>

<svg style="left:340px;top:556px" width="40" height="40"><path d="M25.7 10 L25.7 29.5" stroke="#5a5ad0" stroke-width="1.3"/><path d="M7 29.5 L25.7 29.5" stroke="#e03a3a" stroke-width="1.1"/><path d="M8.5 26 L12.5 33 M12.5 26 L8.5 33 M7 29.5 L14 29.5" stroke="#e03a3a" stroke-width="1.2"/><path d="M29.5 6.5 L34 6.5 L29.5 13 L34 13" stroke="#4848d8" stroke-width="1.5" fill="none"/><path d="M29 29 L31.5 32.5 L34 29 M31.5 32.5 L31.5 36" stroke="#50d050" stroke-width="1.6" fill="none"/></svg>


<!-- DETAILS -->
<div class="a" style="left:1225px;top:72px;width:134px;height:21px;background:#292929;border-radius:5px 5px 0 0"></div>
<div class="a" style="left:1225px;top:93px;width:375px;height:771px;background:linear-gradient(180deg,#292929 0%,#282828 45%,#202020 100%)"></div>

<!-- BOTTOM PANEL -->
<div class="a" style="left:0;top:611px;width:1221px;height:25px;background:#151515"></div>
<div class="a" style="left:129px;top:616px;width:135px;height:20px;background:#242424;border-radius:5px 5px 0 0"></div>
<div class="a" style="left:0;top:636px;width:1221px;height:228px;background:linear-gradient(180deg,#242424,#1f1f1f)"></div>


<!-- DETAILS CONTENT -->
<svg style="left:1228px;top:75px" width="15" height="15"><path d="M2 13 L3 9.5 L11 1.5 L13.5 4 L5.5 12 Z" fill="#d0d0d0"/><path d="M1 14.5 L2.2 11" stroke="#d0d0d0" stroke-width="1"/><path d="M1 2 L6 2 M1 5 L4 5 M8 14 L14 14 M10 11 L14 11" stroke="#888" stroke-width="1"/></svg>
<div class="t" style="left:1247px;top:76px;color:#c8c8c8">Details</div>
<svg style="left:1339.5px;top:78px" width="9" height="9"><path d="M1 1 L7.5 7.5 M7.5 1 L1 7.5" stroke="#c8c8c8" stroke-width="1.4"/></svg>
<svg style="left:1364px;top:75px" width="15" height="15"><path d="M1 8 L3 3 L5 6 L7 1 L9 6 L11 4 L13 8 Z" fill="#c0c0c0"/><path d="M1 9.5 L14 9.5 M1 11.5 L14 11.5 M1 13.5 L14 13.5" stroke="#a8a8a8" stroke-width="1.2"/></svg>
<div class="t" style="left:1383px;top:76px;color:#c8c8c8">Levels</div>
<div class="t" style="left:1349px;top:117.5px;color:#9a9a9a;font-style:italic;font-size:9.6px">Select an object to view details.</div>

<!-- BOTTOM CONTENT -->
<svg style="left:-3px;top:617px" width="16" height="15"><rect x="0" y="2" width="11" height="9" rx="1" fill="#9a9a9a"/><circle cx="9.5" cy="9" r="3.5" fill="#151515" stroke="#c0c0c0" stroke-width="1.4"/><path d="M12 11.5 L14.5 14" stroke="#c0c0c0" stroke-width="1.6"/></svg>
<div class="t" style="left:16px;top:619px;color:#c4c4c4">Content Browser</div>
<div class="a" style="left:133px;top:615.5px;width:125px;height:1.5px;background:linear-gradient(90deg,rgba(30,100,190,0.2),#1e64be 20%,#1e64be 80%,rgba(30,100,190,0.2))"></div>
<svg style="left:133px;top:620px" width="15" height="9"><circle cx="3" cy="4.5" r="2.3" fill="none" stroke="#d8d8d8" stroke-width="1.5"/><circle cx="12" cy="4.5" r="2.3" fill="none" stroke="#d8d8d8" stroke-width="1.5"/><path d="M8.5 1 L6.5 4.5 L8.5 8" stroke="#d8d8d8" stroke-width="1.5" fill="none"/></svg>
<div class="t" style="left:152px;top:619px;color:#d0d0d0">Spaces</div>
<svg style="left:244.5px;top:621px" width="9" height="9"><path d="M1 1 L7.5 7.5 M7.5 1 L1 7.5" stroke="#c8c8c8" stroke-width="1.4"/></svg>

<svg style="left:0px;top:641px" width="24" height="10"><path d="M-2 1 L9 1 M-1 4.5 L6 4.5 M0 8 L3.5 8" stroke="#c0c0c0" stroke-width="1.7"/><path d="M14.5 3 L18 6.5 L21.5 3" stroke="#c0c0c0" stroke-width="1.5" fill="none"/></svg>
<div class="a" style="left:30.5px;top:636.5px;width:166px;height:18.5px;background:#0e0e0e;border-radius:9px"></div>
<svg style="left:33px;top:638.5px" width="14" height="14"><circle cx="6" cy="6" r="4.5" fill="none" stroke="#d0d0d0" stroke-width="1.6"/><path d="M9.2 9.2 L12.5 12.5" stroke="#d0d0d0" stroke-width="1.8"/></svg>
<div class="t" style="left:53px;top:639.5px;color:#555">Search spaces</div>
<div class="a" style="left:200px;top:637px;width:39px;height:18.5px;background:#2a2a2a;border:1px solid #1c1c1c;border-radius:3px"></div>
<svg style="left:212.5px;top:640.5px" width="13" height="13"><path d="M6.5 1 L6.5 12 M1 6.5 L12 6.5" stroke="#8cc43e" stroke-width="1.8"/></svg>
<div class="t" style="left:-2px;top:663px;color:#c0c0c0;font-weight:bold;font-size:10.5px">My Spaces</div>

<div class="a" style="left:0;top:684px;width:98.5px;height:103px;background:#1a1a1a;border-radius:2px"></div>
<div class="a" style="left:0;top:685px;width:98px;height:84px;overflow:hidden;background:linear-gradient(180deg,#7f9fcb 0%,#a9bfdc 35%,#c9d2de 55%,#c0c4c8 62%)">
  <svg style="left:0;top:0" width="98" height="84" viewBox="0 0 98 84">
    <defs>
      <linearGradient id="tw" x1="0" x2="1"><stop offset="0" stop-color="#343434"/><stop offset="0.45" stop-color="#5a5a58"/><stop offset="1" stop-color="#363636"/></linearGradient>
    </defs>
    <ellipse cx="40" cy="8" rx="30" ry="10" fill="rgba(255,255,255,0.35)"/>
    <rect x="0" y="50" width="98" height="14" fill="#2e302c"/>
    <rect x="0" y="62" width="98" height="22" fill="#867a66"/>
    <rect x="0" y="70" width="98" height="14" fill="#94897a"/>
    <rect x="33" y="28" width="28" height="42" fill="#26272a"/>
    <rect x="36" y="13" width="22" height="18" fill="#242629"/>
    <ellipse cx="47" cy="13" rx="13" ry="5" fill="#1c1e22"/>
    <rect x="37" y="20" width="20" height="2" fill="#1a1c1f"/>
    <path d="M45.5 9 L47 1.5 L48.5 9 Z" fill="#1c1e22"/>
    <rect x="5" y="30" width="30" height="40" fill="url(#tw)"/>
    <rect x="58" y="30" width="30" height="40" fill="url(#tw)"/>
    <path d="M4 26 L36 26 L36 31 L4 31 Z" fill="#2a2b2e"/>
    <path d="M57 26 L89 26 L89 31 L57 31 Z" fill="#2a2b2e"/>
    <path d="M4 26 L4 23 L7 23 L7 26 M11 26 L11 23 L14 23 L14 26 M18 26 L18 23 L21 23 L21 26 M25 26 L25 23 L28 23 L28 26 M32 26 L32 23 L35 23 L35 26" fill="#2a2b2e" stroke="#2a2b2e" stroke-width="1"/>
    <path d="M58 26 L58 23 L61 23 L61 26 M65 26 L65 23 L68 23 L68 26 M72 26 L72 23 L75 23 L75 26 M79 26 L79 23 L82 23 L82 26 M86 26 L86 23 L89 23 L89 26" fill="#2a2b2e" stroke="#2a2b2e" stroke-width="1"/>
    <rect x="16" y="36" width="4" height="21" fill="#4a1a1a"/>
    <rect x="74" y="36" width="4" height="21" fill="#4a1a1a"/>
    <path d="M42 70 L42 62 Q47 57 52 62 L52 70 Z" fill="#121212"/>
  </svg>
</div>
<div class="t" style="left:-1px;top:770px;color:#b8b8b8">Medieval Castle</div>

<div class="a" style="left:103.5px;top:684px;width:103px;height:103px;background:#1a1a1a;border-radius:2px"></div>
<div class="a" style="left:104px;top:685px;width:101px;height:84px;overflow:hidden;background:linear-gradient(180deg,#d4d9e2 0%,#e4e6ea 55%,#e8e9eb 100%)">
  <svg style="left:0;top:0" width="101" height="84" viewBox="0 0 101 84">
    <defs>
      <linearGradient id="ped" x1="0" x2="1"><stop offset="0" stop-color="#c2c4c8"/><stop offset="0.5" stop-color="#dcdee0"/><stop offset="1" stop-color="#bec0c4"/></linearGradient>
      <linearGradient id="bpg" x1="0" x2="1"><stop offset="0" stop-color="#b8babe"/><stop offset="0.4" stop-color="#e2e4e8"/><stop offset="1" stop-color="#c8cacf"/></linearGradient>
    </defs>
    <path d="M7 64 L7 84 L94 84 L94 64 Z" fill="url(#ped)"/>
    <ellipse cx="50.5" cy="64" rx="43.5" ry="7.5" fill="#e6e8ea"/>
    <path d="M30 66 L28 34 Q30 20 46 18 Q64 17 70 30 L74 48 L73 64 Q52 72 30 66 Z" fill="url(#bpg)"/>
    <path d="M26 48 Q50 42 76 44 L75 62 Q52 70 28 64 Z" fill="#d6d8dc"/>
    <path d="M26 48 Q50 42 76 44" stroke="#3a3a3a" stroke-width="1" fill="none"/>
    <path d="M27 52 L75 50" stroke="#6a6a6a" stroke-width="0.7"/>
    <path d="M49 26 L50 41" stroke="#2a2a2a" stroke-width="1.8"/>
    <path d="M57 44 L58 55" stroke="#2a2a2a" stroke-width="1.8"/>
    <path d="M40 24 L40 40" stroke="#3a3a3a" stroke-width="0.8"/>
    <path d="M28 48 L28 58" stroke="#2a2a2a" stroke-width="1.6"/>
    <path d="M42 18 Q43 12 47 12 Q50 13 50 18" stroke="#555" stroke-width="1.2" fill="none"/>
    <ellipse cx="56" cy="7" rx="5" ry="4" fill="rgba(255,255,255,0.85)"/>
  </svg>
</div>
<div class="t" style="left:106px;top:770px;color:#b8b8b8">ECommerce</div>

<div class="a" style="left:1211.5px;top:683px;width:7px;height:179px;background:#555;border-radius:4px"></div>
<div class="a" style="left:0;top:864px;width:1600px;height:6px;background:#111"></div>
<div class="a" style="left:0;top:866.5px;width:1600px;height:3.5px;background:#1c1c1c"></div>
<div class="a" style="left:100px;top:866px;width:1.5px;height:4px;background:#0e0e0e"></div>
<div class="a" style="left:188px;top:866px;width:1.5px;height:4px;background:#0e0e0e"></div>
<div class="a" style="left:496px;top:866px;width:1.5px;height:4px;background:#0e0e0e"></div>
<div class="a" style="left:1406px;top:866px;width:1.5px;height:4px;background:#0e0e0e"></div>
<div class="a" style="left:1288px;top:866px;width:1.5px;height:4px;background:#0e0e0e"></div>

<!-- DIALOG -->
<div class="a" id="dlg" style="left:591.5px;top:183px;width:419px;height:513px;background:#1b1b1b;border:1.5px solid #0b0b0b;border-radius:2px"></div>
<svg style="left:598px;top:190px" width="20" height="20" viewBox="0 0 20 20"><path d="M0 7.5 C1.5 3.5 4.5 1 8 0.3 L8.6 1.8 C11 0.9 14.5 0.3 18.2 0.8 C17.2 2.8 16.6 4.8 16.6 7 L16.6 13 C17.6 13 18.6 12.4 19.6 11.4 C19.2 15.5 15.8 18.5 12.2 20 C11.5 19.5 11 19.3 10.5 19.6 C6 19.6 2.2 17 2.2 13.5 L2.2 8.5 Z" fill="#d4d4d4" stroke="#0a0a0a" stroke-width="0.7"/><path d="M9.2 2.5 L9.2 14" stroke="#0a0a0a" stroke-width="1.3"/></svg>
<div class="t" style="left:754px;top:194.5px;color:#cfcfcf">Create a new space</div>
<svg style="left:984.5px;top:195px" width="11" height="11"><path d="M0.8 0.8 L10.2 10.2 M10.2 0.8 L0.8 10.2" stroke="#d8d8d8" stroke-width="1.5"/></svg>
<div class="a" style="left:603.5px;top:222.0px;width:395.5px;height:14px;display:flex;align-items:center"><div style="width:11.5px;height:1.5px;background:#5a5a5a"></div><div style="margin-left:5.5px;margin-right:5px;color:#c4c4c4;white-space:nowrap;line-height:12px">Space Name and Description</div><div style="flex:1;height:1.5px;background:#5a5a5a"></div></div>
<div class="t" style="left:597.6px;top:249.5px;color:#c8c8c8">Space Name</div>
<div class="a" style="left:734px;top:246.5px;width:269px;height:18.0px;background:#0e0e0e;border:1px solid #2c2c2c;border-radius:3px"></div>
<div class="t" style="left:742px;top:249.0px;color:#e0e0e0">Test Space</div>
<div class="t" style="left:597.6px;top:271.5px;color:#c8c8c8">Description</div>
<div class="a" style="left:734px;top:268.5px;width:269px;height:17.5px;background:#0e0e0e;border:1px solid #2c2c2c;border-radius:3px"></div>
<div class="t" style="left:742px;top:271.0px;color:#e0e0e0">A space to test stuff out</div>
<div class="a" style="left:603.5px;top:297.0px;width:395.5px;height:14px;display:flex;align-items:center"><div style="width:11.5px;height:1.5px;background:#5a5a5a"></div><div style="margin-left:5.5px;margin-right:5px;color:#c4c4c4;white-space:nowrap;line-height:12px">Site Model Selection</div><div style="flex:1;height:1.5px;background:#5a5a5a"></div></div>
<div class="t" style="left:604px;top:326.5px;color:#c8c8c8">Site Model</div>
<div class="a" style="left:801.7px;top:323.8px;width:196.69999999999993px;height:17.80000000000001px;background:#0e0e0e;border:1px solid #2c2c2c;border-radius:3px"></div>
<div class="t" style="left:807px;top:326.5px;color:#e0e0e0">Void</div>
<svg style="left:980px;top:330px" width="10" height="7"><path d="M1 1 L4.5 4.5 L8 1" stroke="#d0d0d0" stroke-width="1.6" fill="none"/></svg>
<div class="a" style="left:603.5px;top:355.0px;width:395.5px;height:14px;display:flex;align-items:center"><div style="width:11.5px;height:1.5px;background:#5a5a5a"></div><div style="margin-left:5.5px;margin-right:5px;color:#c4c4c4;white-space:nowrap;line-height:12px">Space Privacy</div><div style="flex:1;height:1.5px;background:#5a5a5a"></div></div>
<div class="t" style="left:601.7px;top:382.5px;color:#c8c8c8">Privacy</div>
<div class="a" style="left:801.7px;top:379.5px;width:199.29999999999995px;height:17.80000000000001px;background:#0e0e0e;border:1px solid #2c2c2c;border-radius:3px"></div>
<div class="t" style="left:807px;top:382.0px;color:#e0e0e0">Private</div>
<svg style="left:982px;top:385.5px" width="10" height="7"><path d="M1 1 L4.5 4.5 L8 1" stroke="#d0d0d0" stroke-width="1.6" fill="none"/></svg>
<div class="a" style="left:603.5px;top:408.0px;width:395.5px;height:14px;display:flex;align-items:center"><div style="width:11.5px;height:1.5px;background:#5a5a5a"></div><div style="margin-left:5.5px;margin-right:5px;color:#c4c4c4;white-space:nowrap;line-height:12px">GeoLocation</div><div style="flex:1;height:1.5px;background:#5a5a5a"></div></div>
<div class="t" style="left:604px;top:437.5px;color:#c8c8c8">Site Latitude</div>
<div class="a" style="left:840.7px;top:435.2px;width:158.0px;height:17.30000000000001px;background:#0e0e0e;border:1px solid #2c2c2c;border-radius:3px"></div>
<div class="t" style="left:847px;top:437.0px;color:#e8e8e8">0.0</div>
<div class="t" style="left:604px;top:459.5px;color:#c8c8c8">Site longitude</div>
<div class="a" style="left:840.7px;top:457px;width:158.0px;height:17.5px;background:#0e0e0e;border:1px solid #2c2c2c;border-radius:3px"></div>
<div class="t" style="left:847px;top:459.0px;color:#e8e8e8">0.0</div>
<div class="t" style="left:604px;top:491.5px;color:#c8c8c8">AR Activation Proximity</div>
<div class="a" style="left:920.7px;top:488.5px;width:78.0px;height:17.5px;background:#0e0e0e;border:1px solid #2c2c2c;border-radius:3px"></div>
<div class="t" style="left:927px;top:490.5px;color:#e8e8e8">50.0</div>
<div class="a" style="left:603.5px;top:514.3px;width:395.5px;height:14px;display:flex;align-items:center"><div style="width:11.5px;height:1.5px;background:#5a5a5a"></div><div style="margin-left:5.5px;margin-right:5px;color:#c4c4c4;white-space:nowrap;line-height:12px">Collaborators</div><div style="flex:1;height:1.5px;background:#5a5a5a"></div></div>
<div class="t" style="left:600px;top:538.5px;color:#c8c8c8">Add Collaborators</div>
<div class="a" style="left:600.5px;top:560.5px;width:266.9px;height:17.100000000000023px;background:#0e0e0e;border:1px solid #2c2c2c;border-radius:3px"></div>
<div class="t" style="left:607.8px;top:562.5px;color:#5c5c5c">Enter collaborator email address</div>
<div class="a" style="left:875.6px;top:560.5px;width:57.69999999999993px;height:16.899999999999977px;background:#0e0e0e;border:1px solid #2c2c2c;border-radius:3px"></div>
<div class="a" style="left:881px;top:562.5px;width:29.5px;height:14px;overflow:hidden"><div class="t" style="left:0;top:0;color:#d0d0d0">Creator</div></div>
<svg style="left:913px;top:566px" width="10" height="7"><path d="M1 1 L4.5 4.5 L8 1" stroke="#d0d0d0" stroke-width="1.6" fill="none"/></svg>
<div class="a" style="left:942px;top:561px;width:58.6px;height:16.5px;background:#383838;border-radius:3px"></div>
<div class="t" style="left:954.5px;top:563.0px;color:#e0e0e0">Add Co</div>
<div class="a" style="left:599px;top:585.4px;width:404.5px;height:23.5px;background:#2c2c2c"></div>
<div class="a" style="left:599px;top:609px;width:404.5px;height:5px;background:#181818"></div>
<div class="a" style="left:800.5px;top:585.4px;width:1.5px;height:23.5px;background:#232323"></div>
<div class="t" style="left:602px;top:592.5px;color:#b8b8b8">Email</div>
<div class="t" style="left:805px;top:592.5px;color:#b8b8b8">Role</div>
<div class="a" style="left:874.5px;top:578.5px;width:59.5px;height:17px;background:#151515;border:1px solid #2a4e80;border-bottom:none;border-radius:3px 3px 0 0"></div>
<div class="t" style="left:880px;top:580.5px;color:#e0e0e0">Creator</div>
<div class="a" style="left:874.5px;top:595px;width:59.5px;height:18.5px;background:#0b78e0;border-radius:0 0 3px 3px"></div>
<div class="t" style="left:880.5px;top:598.0px;color:#eaf2ff">Viewer</div>
<div class="a" style="left:600.7px;top:617.3px;width:399.3px;height:14px;display:flex;align-items:center"><div style="width:11.5px;height:1.5px;background:#5a5a5a"></div><div style="margin-left:5.8px;margin-right:5px;color:#c4c4c4;white-space:nowrap;line-height:12px">Confirm Space Details</div><div style="flex:1;height:1.5px;background:#5a5a5a"></div></div>
<div class="a" style="left:948px;top:638.2px;width:56.8px;height:16.5px;background:#363636;border-radius:3px"></div>
<div class="t" style="left:960px;top:640.5px;color:#dedede">Create</div>
<svg style="left:913px;top:608px" width="32" height="44"><path d="M3.5 2.5 L3.5 35 L11.5 28 L17.5 40 L23 37.5 L17.5 26 L28 25 Z" fill="#efefef" stroke="#0a0a0a" stroke-width="2.2" stroke-linejoin="round"/></svg>

</body></html>
